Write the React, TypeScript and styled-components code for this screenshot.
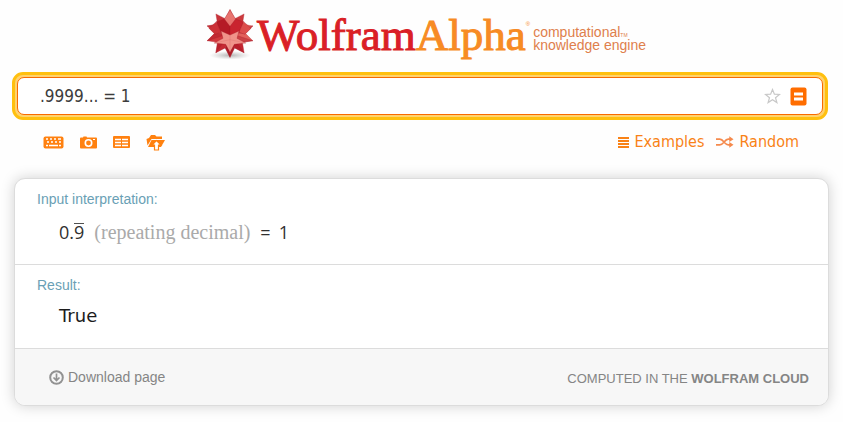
import React from "react";
import styled, { createGlobalStyle } from "styled-components";

const ui = '"DejaVu Sans Condensed", "DejaVu Sans", sans-serif';
const arial = '"Liberation Sans", Arial, sans-serif';

const GlobalStyle = createGlobalStyle`
  * { box-sizing: border-box; }
  body { margin: 0; background: #fefefe; font-family: ${arial}; }
  button { border: 0; padding: 0; background: none; cursor: pointer; }
  svg { display: block; }
`;

const Page = styled.main`
  display: flex;
  flex-direction: column;
  padding: 0 14px 17px;
`;

const Header = styled.header`
  display: flex;
  justify-content: center;
  height: 72px;
  padding: 9px 0 0 8px;
`;

const Logo = styled.a`
  display: flex;
  align-items: flex-start;
  text-decoration: none;
`;

const Wordmark = styled.span`
  display: flex;
  margin-left: 2px;
  font: 45px/52px "Liberation Serif", serif;
  color: #da1f26;
  -webkit-text-stroke: 1px currentColor;
`;

const Alpha = styled.span`
  color: #f78b24;
`;

const Registered = styled.span`
  padding-top: 11px;
  font: 6px/8px ${arial};
  color: #f78b24;
`;

const Tagline = styled.span`
  display: flex;
  flex-direction: column;
  padding: 17px 0 0 3px;
  font: 14px/13px ${arial};
  color: #df7f4c;
`;

const TaglineRow = styled.span`
  display: flex;
  align-items: flex-end;
`;

const Trademark = styled.small`
  font-size: 5px;
  line-height: 8px;
`;

const SearchFrame = styled.form`
  margin: 0 1px 0 -2px;
  padding: 2px;
  border: 3px solid #ffc00f;
  border-radius: 11px;
  background: #ffd26e;
`;

const SearchField = styled.div`
  display: flex;
  align-items: center;
  height: 38px;
  padding: 0 15px 0 22px;
  border: 1px solid #f96a00;
  border-radius: 7px;
  background: #fff;
`;

const Query = styled.input`
  flex: 1;
  min-width: 0;
  padding: 0;
  border: 0;
  outline: 0;
  background: none;
  font: 17px/24px ${ui};
  color: #3c3c3c;
`;

const FieldActions = styled.div`
  display: flex;
  align-items: center;
  gap: 9px;
`;

const Toolbar = styled.nav`
  display: flex;
  align-items: center;
  justify-content: space-between;
  height: 44px;
  margin-bottom: 14px;
  padding: 0 30px 0 29px;
`;

const Tools = styled.div`
  display: flex;
  align-items: center;
  gap: 16px;
`;

const Shortcuts = styled.div`
  display: flex;
  gap: 12px;
`;

const Shortcut = styled.a`
  display: flex;
  align-items: center;
  gap: 5px;
  font: 16px/20px ${ui};
  color: #f98216;
  text-decoration: none;
`;

const Results = styled.section`
  overflow: hidden;
  border: 1px solid #dcdcdc;
  border-radius: 11px;
  background: #fff;
  box-shadow: 0 0 14px rgba(0, 0, 0, 0.18);
`;

const Pod = styled.article<{ $tall?: boolean }>`
  height: ${(p) => (p.$tall ? 86 : 84)}px;
  padding: 10px 22px 0;
  border-bottom: 1px solid #dcdcdc;
`;

const PodTitle = styled.h2`
  margin: 0;
  font: 14px/20px ${arial};
  color: #6a9fb5;
`;

const Answer = styled.p`
  display: flex;
  align-items: baseline;
  margin: 0;
  padding: 11px 22px 0;
  font: 18px/24px "Open Sans", "Noto Sans", sans-serif;
  color: #303030;
  white-space: pre;
`;

const BooleanAnswer = styled(Answer)`
  padding-top: 9px;
  font-family: "DejaVu Sans", sans-serif;
  color: #1c1c1c;
`;

const Repeating = styled.span`
  background: linear-gradient(#505050, #505050) 0 3px / 100% 1px no-repeat;
`;

const Note = styled.span`
  margin: 0 10px;
  font: 20px/24px "Liberation Serif", serif;
  color: #aaa;
`;

const Equation = styled.span`
  display: flex;
  gap: 8px;
`;

const Footer = styled.footer`
  display: flex;
  align-items: center;
  justify-content: space-between;
  height: 56px;
  padding: 0 19px 0 34px;
  background: #f7f7f7;
  color: #858585;
`;

const Download = styled.button`
  display: flex;
  align-items: center;
  gap: 4px;
  font: 14px/20px ${arial};
  color: #858585;
`;

const Cloud = styled.span`
  padding-top: 4px;
  font: 13px/20px ${arial};
`;

function Spikey() {
  const point = (radius: number, degrees: number) => {
    const a = (degrees * Math.PI) / 180;
    return `${(75 + radius * Math.sin(a)).toFixed(1)},${(73 - radius * Math.cos(a)).toFixed(1)}`;
  };
  const tips = ["#e87670", "#cc3a3d", "#e56660", "#e2605b", "#c42531", "#b01f2a", "#c62a33", "#d2383e", "#dd504e", "#c9333a"];
  return (
    <svg width="50" height="52" viewBox="0 0 150 156" aria-hidden="true">
      <defs>
        <radialGradient id="ground">
          <stop offset="0" stopColor="#777" stopOpacity=".55" />
          <stop offset="1" stopColor="#999" stopOpacity="0" />
        </radialGradient>
      </defs>
      <ellipse cx="75" cy="139" rx="62" ry="13" fill="url(#ground)" />
      {tips.map((fill, i) => {
        const a = i * 36;
        return (
          <g key={i} stroke="#ad1e29" strokeWidth="1">
            <polygon fill={fill} points={`${point(72, a)} ${point(46, a + 18)} 75,73 ${point(46, a - 18)}`} />
            {i > 1 && i < 9 && <polygon fill="#a91522" fillOpacity=".4" points={`${point(72, a)} ${point(46, a + 18)} 75,73`} />}
          </g>
        );
      })}
      <g stroke="#a81c27" strokeWidth="1">
        <polygon fill="#b51a26" points="59,30 75,50 75,82 48,70 34,38" />
        <polygon fill="#c9242f" points="91,30 75,50 75,82 102,70 116,38" />
        <polygon fill="#e8746f" points="75,3 92,30 75,52 58,30" />
        <polygon fill="#cc3138" points="48,70 34,38 12,58 30,76" />
        <polygon fill="#dc4c4b" points="102,70 116,38 138,58 120,76" />
        <polygon fill="#f0938a" points="75,78 48,66 54,88 28,102 62,106 75,130 88,106 122,102 96,88 102,66" />
        <path d="M75 78v52M75 92l-47 10M75 92l47 10" fill="none" stroke="#de6966" />
      </g>
    </svg>
  );
}

const KeyboardIcon = () => (
  <svg width="21" height="13" viewBox="0 0 21 13">
    <rect x="0.5" y="0.5" width="20" height="12" rx="2" fill="#ff8110" />
    <path d="M3 3h2M7 3h2M11 3h2M15 3h3M4 6h2M8 6h2M12 6h2M16 6h2M3 9.5h2M6 9.5h9M16 9.5h2" stroke="#fff" strokeWidth="1.5" />
  </svg>
);

const CameraIcon = () => (
  <svg width="17" height="13" viewBox="0 0 17 13">
    <path d="M1 1.5h2l.5-1h3l.5 1h9a1 1 0 0 1 1 1v9a1 1 0 0 1-1 1H1a1 1 0 0 1-1-1v-9a1 1 0 0 1 1-1z" fill="#ff8110" />
    <circle cx="8.5" cy="7" r="3.2" fill="none" stroke="#fff" strokeWidth="1.6" />
    <path d="M13 3.5h2" stroke="#fff" />
  </svg>
);

const TableIcon = () => (
  <svg width="17" height="12" viewBox="0 0 17 12">
    <rect width="17" height="12" rx="1" fill="#ff8110" />
    <path d="M2 3.5h6M9 3.5h6M2 6.5h6M9 6.5h6M2 9.5h6M9 9.5h6" stroke="#fff" strokeWidth="1.3" />
  </svg>
);

const UploadIcon = () => (
  <svg width="19" height="17" viewBox="0 0 19 17">
    <path d="M1.5 11.5 .5 5 3 4l2-3h4l1.500 1.500H16V5H5.500z" fill="#ff8110" />
    <path d="M5.500 6H19l-4 7H2z" fill="#ff8110" />
    <path d="m10.500 6.500 4.500 4.500h-2.500v5h-4v-5H6z" fill="#fff" stroke="#ff8110" strokeWidth="1.200" />
  </svg>
);

const StarIcon = () => (
  <svg width="17" height="16" viewBox="0 0 17 16">
    <path d="m8.5 1.5 1.9 4.7 5.1.3-4 3.2 1.4 4.9-4.4-2.8-4.4 2.8 1.4-4.9-4-3.2 5.1-.3z" fill="none" stroke="#c8c8c8" strokeWidth="1.2" />
  </svg>
);

const EqualsIcon = () => (
  <svg width="17" height="19" viewBox="0 0 17 19">
    <rect x="0.5" y="0.5" width="16" height="18" rx="2" fill="#ff6d00" />
    <path d="M4 7h9M4 12h9" stroke="#fff" strokeWidth="3" />
  </svg>
);

const ListIcon = () => (
  <svg width="11" height="11" viewBox="0 0 11 11">
    <path d="M0 1h11M0 4h11M0 7h11M0 10h11" stroke="#f98216" strokeWidth="2" />
  </svg>
);

const ShuffleIcon = () => (
  <svg width="18" height="12" viewBox="0 0 19 12">
    <path d="M0 3h4c4 0 5 6 9 6h3M0 9h4c4 0 5-6 9-6h3" fill="none" stroke="#f58a4d" strokeWidth="1.8" />
    <path d="m14 0 4.5 3L14 6zM14 6l4.5 3-4.5 3z" fill="#f58a4d" />
  </svg>
);

const DownloadIcon = () => (
  <svg width="15" height="15" viewBox="0 0 15 15">
    <circle cx="7.5" cy="7.5" r="6.3" fill="none" stroke="#929292" strokeWidth="2" />
    <path d="M7.5 3.5v7M4.5 7.5l3 3 3-3" fill="none" stroke="#929292" strokeWidth="1.7" />
  </svg>
);

export default function App() {
  return (
    <>
      <GlobalStyle />
      <Page>
        <Header>
          <Logo href="#" aria-label="WolframAlpha computational knowledge engine">
            <Spikey />
            <Wordmark>Wolfram<Alpha>Alpha</Alpha></Wordmark>
            <Registered>®</Registered>
            <Tagline>
              <TaglineRow>computational<Trademark>TM</Trademark></TaglineRow>
              <TaglineRow>knowledge engine</TaglineRow>
            </Tagline>
          </Logo>
        </Header>
        <SearchFrame onSubmit={(e) => e.preventDefault()}>
          <SearchField>
            <Query aria-label="Query" defaultValue=".9999... = 1" />
            <FieldActions>
              <button type="button" aria-label="Add to favorites"><StarIcon /></button>
              <button type="submit" aria-label="Compute"><EqualsIcon /></button>
            </FieldActions>
          </SearchField>
        </SearchFrame>
        <Toolbar>
          <Tools>
            <button aria-label="Extended keyboard"><KeyboardIcon /></button>
            <button aria-label="Image input"><CameraIcon /></button>
            <button aria-label="Data input"><TableIcon /></button>
            <button aria-label="File upload"><UploadIcon /></button>
          </Tools>
          <Shortcuts>
            <Shortcut href="#"><ListIcon />Examples</Shortcut>
            <Shortcut href="#"><ShuffleIcon />Random</Shortcut>
          </Shortcuts>
        </Toolbar>
        <Results>
          <Pod $tall>
            <PodTitle>Input interpretation:</PodTitle>
            <Answer>
              0.<Repeating>9</Repeating><Note>(repeating decimal)</Note>
              <Equation><span>=</span><span>1</span></Equation>
            </Answer>
          </Pod>
          <Pod>
            <PodTitle>Result:</PodTitle>
            <BooleanAnswer>True</BooleanAnswer>
          </Pod>
          <Footer>
            <Download><DownloadIcon />Download page</Download>
            <Cloud>COMPUTED IN THE <b>WOLFRAM CLOUD</b></Cloud>
          </Footer>
        </Results>
      </Page>
    </>
  );
}
